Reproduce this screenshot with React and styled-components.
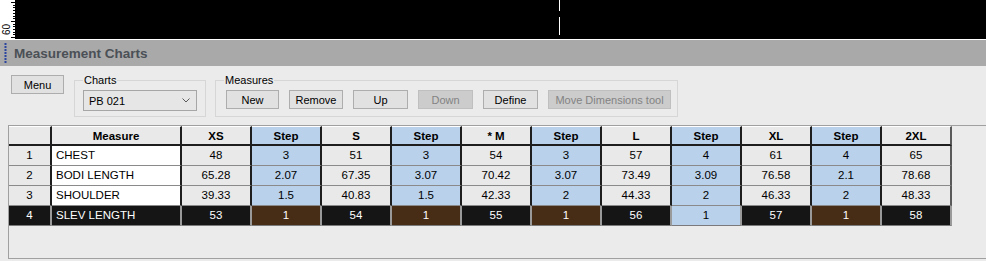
import React from 'react';
import styled, { createGlobalStyle } from 'styled-components';

const GlobalStyle = createGlobalStyle`
  html, body { margin: 0; padding: 0; background: #ebebeb; }
  body { font-family: "Liberation Sans", Arial, sans-serif; font-size: 11px; color: #000; overflow: hidden; }
  *, *::before, *::after { box-sizing: border-box; }
`;

const Page = styled.div`
  width: 986px;
  height: 261px;
  display: flex;
  flex-direction: column;
  background: #ebebeb;
  overflow: hidden;
`;

const TopStrip = styled.div`
  flex: none;
  height: 40px;
  display: flex;
  background: #000;
  border-bottom: 1px solid #fff;
`;

const RulerSvg = styled.svg`
  flex: none;
  display: block;
`;

const Canvas = styled.div`
  flex: 1;
  background: #000;
  svg { display: block; }
`;

const TitleBar = styled.div`
  flex: none;
  height: 26px;
  background: #a9a9a9;
  display: flex;
  align-items: center;
  padding-left: 4px;
`;

const Title = styled.span`
  margin-left: 7px;
  font-size: 13.5px;
  font-weight: bold;
  color: #4b5056;
`;

const Toolbar = styled.div`
  flex: none;
  height: 59px;
  display: flex;
  align-items: flex-start;
  padding: 7px 0 0 11px;
`;

const Button = styled.div`
  flex: none;
  width: ${p => p.$w || 54}px;
  height: 19px;
  margin-top: ${p => p.$mt || 0}px;
  display: flex;
  align-items: center;
  justify-content: center;
  background: ${p => (p.$disabled ? '#cccccc' : '#e1e1e1')};
  border: 1px solid ${p => (p.$disabled ? '#bfbfbf' : '#adadad')};
  color: ${p => (p.$disabled ? '#838383' : '#000')};
  font-size: 11px;
  white-space: nowrap;
`;

const Group = styled.fieldset`
  flex: none;
  margin: 0 0 0 ${p => p.$ml}px;
  width: ${p => p.$w}px;
  height: 44px;
  padding: 2px 8px 5px 8px;
  border: 1px solid #d6d6d6;
  min-width: 0;
`;

const Legend = styled.legend`
  padding: 0 1px;
  font-size: 11px;
  line-height: 14px;
  color: #000;
`;

const Combo = styled.div`
  width: 114px;
  height: 21px;
  margin-top: 1px;
  display: flex;
  align-items: center;
  justify-content: space-between;
  padding: 0 6px 0 5px;
  background: #e6e6e6;
  border: 1px solid #a6a6a6;
  font-size: 11px;
`;

const ButtonRow = styled.div`
  display: flex;
  gap: 10px;
  margin: 1px 0 0 2px;
`;

const Panel = styled.div`
  flex: none;
  height: 134px;
  margin-left: 8px;
  border: 1px solid #a0a0a0;
  border-right: none;
`;

const Grid = styled.div`
  display: grid;
  grid-template-columns: 43px 130px repeat(11, 70px);
  grid-template-rows: 20px repeat(4, 20px);
`;

const palette = {
  plain: { bg: '#e9e9e9', fg: '#000' },
  name: { bg: '#ffffff', fg: '#000' },
  step: { bg: '#b9d1ea', fg: '#000' },
  sel: { bg: '#151515', fg: '#fff' },
  selStep: { bg: '#472d16', fg: '#fff' },
};

const Cell = styled.div`
  display: flex;
  align-items: center;
  justify-content: ${p => (p.$left ? 'flex-start' : 'center')};
  padding-left: ${p => (p.$left ? 4 : 0)}px;
  padding-bottom: 2px;
  background: ${p => palette[p.$kind].bg};
  color: ${p => palette[p.$kind].fg};
  border-right: 2px solid ${p => (p.$selRow ? '#9a9a9a' : p.$last ? '#5a5a5a' : '#1e1e1e')};
  border-bottom: 1px solid ${p => (p.$selRow ? '#7a7a7a' : '#8a8a8a')};
  font-size: 11.5px;
  white-space: nowrap;
  overflow: hidden;
`;

const HeadCell = styled.div`
  display: flex;
  align-items: center;
  justify-content: center;
  background: ${p => (p.$step ? '#b9d1ea' : '#e9e9e9')};
  border-top: 1px solid #ffffff;
  border-right: 2px solid ${p => (p.$last ? '#5a5a5a' : '#1e1e1e')};
  border-bottom: 2px solid #1e1e1e;
  font-size: 11.5px;
  font-weight: bold;
`;

const Ruler = () => {
  const ticks = [];
  for (let i = 0; i < 14; i++) {
    const y = 2 + Math.round(i * 2.7);
    const long = i === 0 || i === 13 || i === 7;
    ticks.push(<rect key={i} x={long ? 11 : 13} y={y} width={long ? 4 : 2} height={1} fill="#000" />);
  }
  return (
    <RulerSvg width="15" height="39" viewBox="0 0 15 39">
      <rect width="15" height="39" fill="#fff" />
      {ticks}
      <text transform="translate(10,35) rotate(-90)" fontSize="10" fontFamily="Liberation Sans, Arial, sans-serif" fill="#000">60</text>
    </RulerSvg>
  );
};

const Grip = () => (
  <svg width="3" height="20" viewBox="0 0 3 20" style={{ display: 'block' }}>
    {[0, 3, 6, 9, 12, 15, 18].map(y => (
      <rect key={y} x="0.5" y={y} width="2" height="2" fill="#2c46a0" />
    ))}
  </svg>
);

const Chevron = () => (
  <svg width="8" height="5" viewBox="0 0 8 5">
    <path d="M0.5 0.5 L4 4 L7.5 0.5" stroke="#5a5a5a" fill="none" strokeWidth="1" />
  </svg>
);

const sizes = ['XS', 'Step', 'S', 'Step', '* M', 'Step', 'L', 'Step', 'XL', 'Step', '2XL'];

const rows = [
  { n: 1, name: 'CHEST', v: ['48', '3', '51', '3', '54', '3', '57', '4', '61', '4', '65'] },
  { n: 2, name: 'BODI LENGTH', v: ['65.28', '2.07', '67.35', '3.07', '70.42', '3.07', '73.49', '3.09', '76.58', '2.1', '78.68'] },
  { n: 3, name: 'SHOULDER', v: ['39.33', '1.5', '40.83', '1.5', '42.33', '2', '44.33', '2', '46.33', '2', '48.33'] },
  { n: 4, name: 'SLEV LENGTH', v: ['53', '1', '54', '1', '55', '1', '56', '1', '57', '1', '58'], sel: true },
];

const measureButtons = [
  { t: 'New', w: 53 },
  { t: 'Remove', w: 54 },
  { t: 'Up', w: 55 },
  { t: 'Down', w: 55, d: true },
  { t: 'Define', w: 55 },
  { t: 'Move Dimensions tool', w: 123, d: true },
];

export default function App() {
  return (
    <Page>
      <GlobalStyle />
      <TopStrip>
        <Ruler />
        <Canvas>
          <svg width="100%" height="39">
            <rect x="544" y="0" width="1" height="11" fill="#fff" />
            <rect x="544" y="17" width="1" height="18" fill="#fff" />
          </svg>
        </Canvas>
      </TopStrip>
      <TitleBar>
        <Grip />
        <Title>Measurement Charts</Title>
      </TitleBar>
      <Toolbar>
        <Button $w={53} $mt={2}>Menu</Button>
        <Group $ml={10} $w={132}>
          <Legend>Charts</Legend>
          <Combo>
            <span>PB 021</span>
            <Chevron />
          </Combo>
        </Group>
        <Group $ml={9} $w={463}>
          <Legend>Measures</Legend>
          <ButtonRow>
            {measureButtons.map(b => (
              <Button key={b.t} $w={b.w} $disabled={b.d}>{b.t}</Button>
            ))}
          </ButtonRow>
        </Group>
      </Toolbar>
      <Panel>
        <Grid>
          <HeadCell />
          <HeadCell>Measure</HeadCell>
          {sizes.map((s, i) => (
            <HeadCell key={i} $step={s === 'Step'} $last={i === sizes.length - 1}>{s}</HeadCell>
          ))}
          {rows.map(r => (
            <React.Fragment key={r.n}>
              <Cell $kind={r.sel ? 'sel' : 'plain'} $selRow={r.sel}>{r.n}</Cell>
              <Cell $kind={r.sel ? 'sel' : 'name'} $selRow={r.sel} $left>{r.name}</Cell>
              {r.v.map((v, i) => {
                const isStep = i % 2 === 1;
                let kind = 'plain';
                if (r.sel) kind = isStep ? (i === 7 ? 'step' : 'selStep') : 'sel';
                else kind = isStep ? 'step' : 'plain';
                return (
                  <Cell key={i} $kind={kind} $selRow={r.sel} $last={i === r.v.length - 1}>{v}</Cell>
                );
              })}
            </React.Fragment>
          ))}
        </Grid>
      </Panel>
    </Page>
  );
}
